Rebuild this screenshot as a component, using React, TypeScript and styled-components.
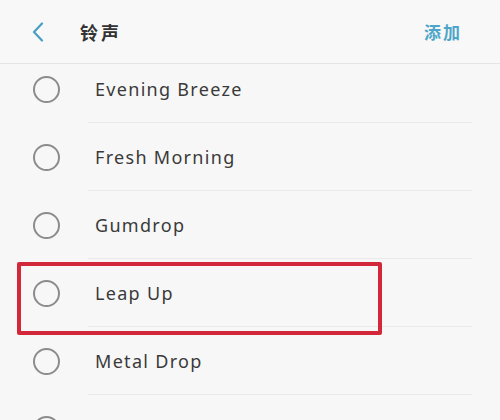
import React from "react";
import styled, { createGlobalStyle } from "styled-components";

const Global = createGlobalStyle`
  html, body { margin: 0; padding: 0; }
  body {
    width: 500px;
    height: 420px;
    overflow: hidden;
    background: #f7f7f7;
    font-family: "Noto Sans", "Noto Sans CJK SC", sans-serif;
  }
`;

const Screen = styled.div`
  position: relative;
  width: 500px;
  height: 420px;
  overflow: hidden;
  background: #f7f7f7;
  display: flex;
  flex-direction: column;
`;

const Header = styled.header`
  position: relative;
  z-index: 2;
  height: 63px;
  flex: 0 0 auto;
  display: flex;
  align-items: center;
  padding: 0 38px 0 30px;
  background: #f8f8f8;
  border-bottom: 1px solid #e4e4e4;
`;

const BackButton = styled.button`
  width: 16px;
  height: 22px;
  padding: 0;
  margin: 0 34px 0 0;
  border: none;
  background: none;
  display: flex;
  align-items: center;
  justify-content: center;
`;

const Title = styled.h1`
  margin: 0;
  flex: 1;
  font-family: "Noto Sans CJK SC", sans-serif;
  font-size: 18px;
  font-weight: 700;
  letter-spacing: 3px;
  color: #333;
`;

const Action = styled.span`
  font-family: "Noto Sans CJK SC", sans-serif;
  font-size: 17px;
  font-weight: 700;
  letter-spacing: 2px;
  color: #4da6c9;
`;

const Viewport = styled.div`
  flex: 1;
  overflow: hidden;
`;

const List = styled.ul`
  list-style: none;
  margin: -9px 0 0;
  padding: 0;
`;

const Row = styled.li`
  height: 68px;
  display: flex;
  align-items: center;
  padding-left: 33px;
`;

const Radio = styled.span`
  flex: 0 0 auto;
  width: 23px;
  height: 23px;
  border: 2px solid #8c8c8c;
  border-radius: 50%;
  margin-right: 28px;
`;

const Label = styled.div<{ $last?: boolean }>`
  flex: 1;
  align-self: stretch;
  display: flex;
  align-items: center;
  padding-left: 7px;
  margin-right: 28px;
  border-bottom: ${(p) => (p.$last ? "none" : "1px solid #eaeaea")};
  font-size: 18px;
  letter-spacing: 1.3px;
  color: #3a3a3a;
`;

const Highlight = styled.div`
  position: absolute;
  left: 17px;
  top: 262px;
  width: 357px;
  height: 65px;
  border: 4px solid #d3283a;
  border-radius: 2px;
  pointer-events: none;
`;

const tones = [
  "Evening Breeze",
  "Fresh Morning",
  "Gumdrop",
  "Leap Up",
  "Metal Drop",
  "Morning Dew",
];

export default function App() {
  return (
    <>
      <Global />
      <Screen>
        <Header>
          <BackButton aria-label="back">
            <svg width="14" height="20" viewBox="0 0 14 20">
              <polyline
                points="11,1.5 3,10 11,18.5"
                fill="none"
                stroke="#4a9ec4"
                strokeWidth="2.2"
                strokeLinecap="round"
                strokeLinejoin="round"
              />
            </svg>
          </BackButton>
          <Title>铃声</Title>
          <Action>添加</Action>
        </Header>
        <Viewport>
          <List>
            {tones.map((t, i) => (
              <Row key={t}>
                <Radio />
                <Label $last={i === tones.length - 1}>{t}</Label>
              </Row>
            ))}
          </List>
        </Viewport>
        <Highlight />
      </Screen>
    </>
  );
}
